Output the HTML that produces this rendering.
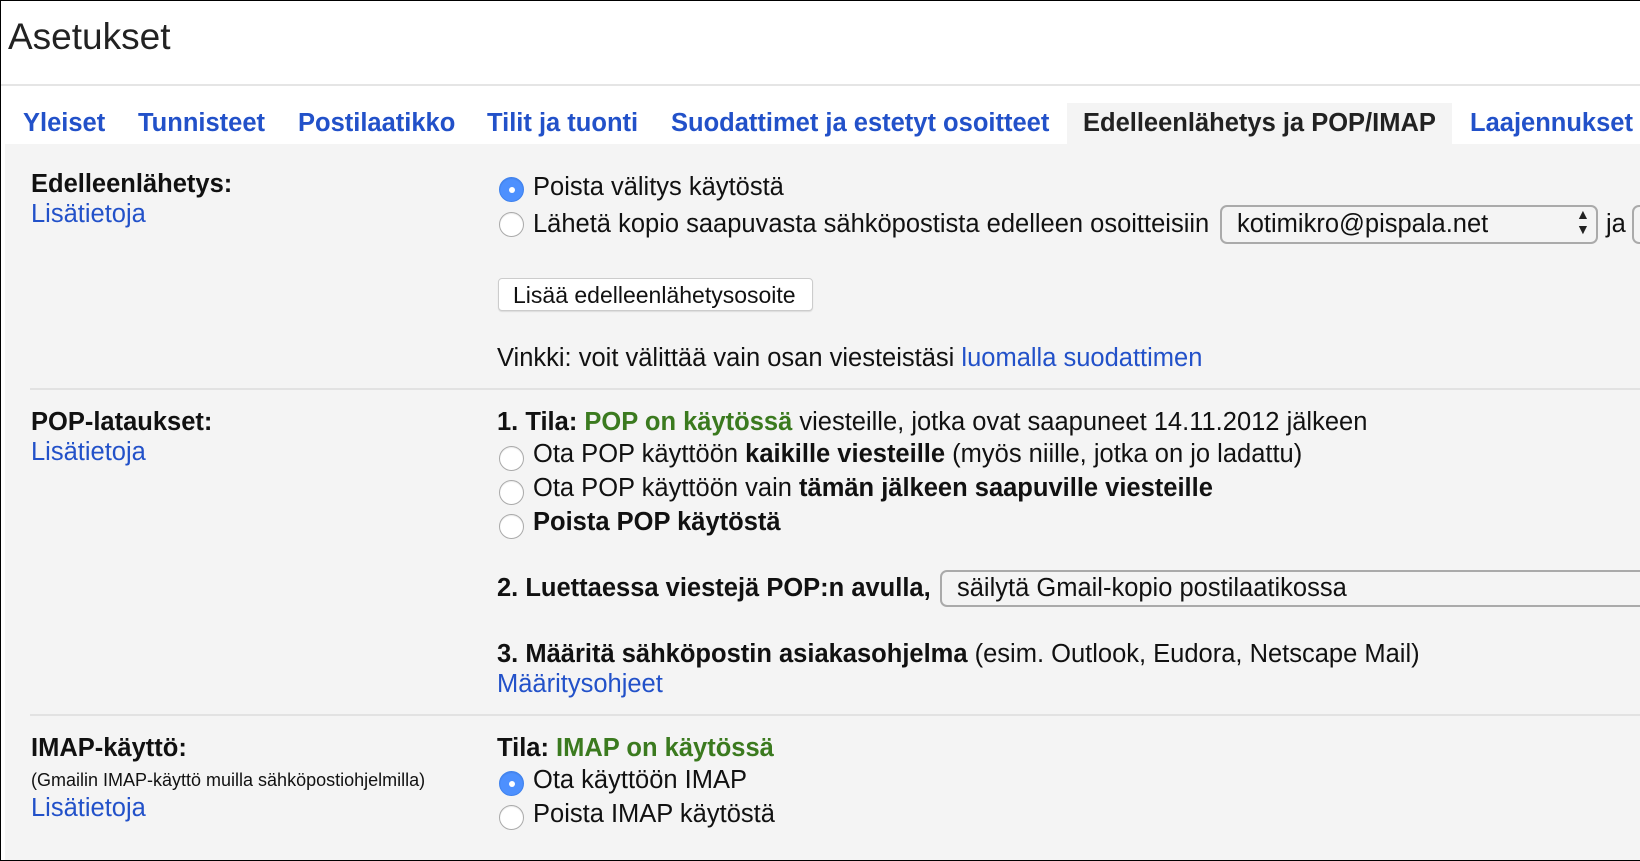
<!DOCTYPE html>
<html><head><meta charset="utf-8"><style>
*{margin:0;padding:0;box-sizing:border-box}
body{width:1640px;height:861px;overflow:hidden;background:#fff;font-family:"Liberation Sans",Arial,sans-serif;color:#111;position:relative}
#frame{position:absolute;left:0;top:0;width:1640px;height:861px;border:1px solid #000;border-right:none}
.a{position:absolute;white-space:nowrap;line-height:26px}
.t{font-size:25.5px;font-weight:bold;color:#2251c9;top:110px}
.f{font-size:25.5px}
.b{font-weight:bold}
.l{color:#2251c9}
.g{color:#3b7a1f;font-weight:bold}
.r{position:absolute;width:25px;height:25px;border-radius:50%;background:#fff;border:1px solid #aaa;box-shadow:inset 0 1px 1px rgba(0,0,0,.08)}
.r.on{background:#4d90fe;border-color:#3f82ee}
.r.on::after{content:"";position:absolute;left:9px;top:9px;width:6px;height:6px;border-radius:50%;background:#fff}
.hr{position:absolute;left:30px;right:0;height:2px;background:#e2e2e2}
</style></head><body>
<div style="position:absolute;left:0;top:84px;width:1640px;height:2px;background:#e5e5e5"></div>
<div style="position:absolute;left:5px;top:144px;width:1635px;height:717px;background:#f4f4f4"></div>
<div style="position:absolute;left:1067px;top:103px;width:385px;height:42px;background:#f4f4f4"></div>
<div class="a" style="left:8px;top:17px;font-size:37px;line-height:40px;color:#222">Asetukset</div>
<div class="a t" style="left:23px">Yleiset</div>
<div class="a t" style="left:138px">Tunnisteet</div>
<div class="a t" style="left:298px">Postilaatikko</div>
<div class="a t" style="left:487px">Tilit ja tuonti</div>
<div class="a t" style="left:671px">Suodattimet ja estetyt osoitteet</div>
<div class="a t" style="left:1083px;color:#222">Edelleenlähetys ja POP/IMAP</div>
<div class="a t" style="left:1470px">Laajennukset</div>

<div class="a f b" style="left:31px;top:171px">Edelleenlähetys:</div>
<div class="a f l" style="left:31px;top:201px">Lisätietoja</div>
<div class="r on" style="left:499px;top:177px"></div>
<div class="a f" style="left:533px;top:174px">Poista välitys käytöstä</div>
<div class="r" style="left:499px;top:212px"></div>
<div class="a f" style="left:533px;top:211px">Lähetä kopio saapuvasta sähköpostista edelleen osoitteisiin</div>
<div style="position:absolute;left:1220px;top:205px;width:378px;height:39px;border:2px solid #aaa;border-radius:7px;background:#f4f4f4"></div>
<div class="a f" style="left:1237px;top:211px">kotimikro@pispala.net</div>
<div class="a" style="left:1576px;top:207px;font-size:14px;line-height:15px;color:#222">▲<br>▼</div>
<div class="a f" style="left:1606px;top:211px">ja</div>
<div style="position:absolute;left:1632px;top:205px;width:20px;height:39px;border:2px solid #aaa;border-radius:7px"></div>
<div style="position:absolute;left:498px;top:278px;width:315px;height:33px;background:#fff;border:1px solid #ccc;border-radius:4px;box-shadow:0 1px 1px rgba(0,0,0,.1)"></div>
<div class="a" style="left:513px;top:282px;font-size:23px">Lisää edelleenlähetysosoite</div>
<div class="a f" style="left:497px;top:345px">Vinkki: voit välittää vain osan viesteistäsi <span class="l">luomalla suodattimen</span></div>
<div class="hr" style="top:388px"></div>

<div class="a f b" style="left:31px;top:409px">POP-lataukset:</div>
<div class="a f l" style="left:31px;top:439px">Lisätietoja</div>
<div class="a f" style="left:497px;top:409px"><span class="b">1. Tila: </span><span class="g">POP on käytössä</span> viesteille, jotka ovat saapuneet 14.11.2012 jälkeen</div>
<div class="r" style="left:499px;top:446px"></div>
<div class="a f" style="left:533px;top:441px">Ota POP käyttöön <span class="b">kaikille viesteille</span> (myös niille, jotka on jo ladattu)</div>
<div class="r" style="left:499px;top:480px"></div>
<div class="a f" style="left:533px;top:475px">Ota POP käyttöön vain <span class="b">tämän jälkeen saapuville viesteille</span></div>
<div class="r" style="left:499px;top:514px"></div>
<div class="a f b" style="left:533px;top:509px">Poista POP käytöstä</div>
<div class="a f b" style="left:497px;top:575px">2. Luettaessa viestejä POP:n avulla,</div>
<div style="position:absolute;left:940px;top:570px;width:720px;height:37px;border:2px solid #aaa;border-radius:7px"></div>
<div class="a f" style="left:957px;top:575px">säilytä Gmail-kopio postilaatikossa</div>
<div class="a f" style="left:497px;top:641px"><span class="b">3. Määritä sähköpostin asiakasohjelma</span> (esim. Outlook, Eudora, Netscape Mail)</div>
<div class="a f l" style="left:497px;top:671px">Määritysohjeet</div>
<div class="hr" style="top:714px"></div>

<div class="a f b" style="left:31px;top:735px">IMAP-käyttö:</div>
<div class="a" style="left:31px;top:770px;font-size:18px;line-height:20px">(Gmailin IMAP-käyttö muilla sähköpostiohjelmilla)</div>
<div class="a f l" style="left:31px;top:795px">Lisätietoja</div>
<div class="a f" style="left:497px;top:735px"><span class="b">Tila: </span><span class="g">IMAP on käytössä</span></div>
<div class="r on" style="left:499px;top:771px"></div>
<div class="a f" style="left:533px;top:767px">Ota käyttöön IMAP</div>
<div class="r" style="left:499px;top:805px"></div>
<div class="a f" style="left:533px;top:801px">Poista IMAP käytöstä</div>
<div id="frame"></div>
</body></html>
